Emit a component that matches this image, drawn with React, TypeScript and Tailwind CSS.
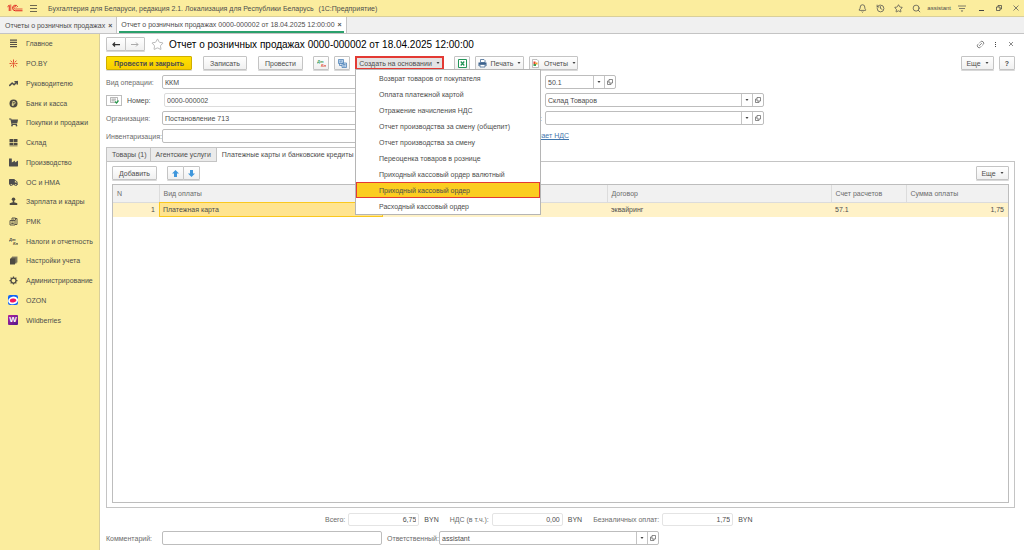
import type { ReactNode } from "react"
import { Bell, History, Link2, Search, Star, TrendingUp } from "lucide-react"
import { FaIndustry, FaShoppingCart, FaTruck } from "react-icons/fa"
import clsx from "clsx"

const iconBox = "size-[9px] shrink-0"

function Logo() {
  return (
    <svg viewBox="0 0 32 16" className="h-2 w-4" fill="none" stroke="#e0221c" strokeWidth="2">
      <path d="M1 5.5 4.5 2.500V14" />
      <path d="M7.500 1V14" strokeWidth="1.500" />
      <path d="M21.500 5.500A5.500 5.500 0 1 0 16.500 13.500H31" />
      <path d="M18.500 7A2.500 2.500 0 1 0 16.500 10H31" strokeWidth="1.500" />
    </svg>
  )
}

function ListIcon() {
  return (
    <svg viewBox="0 0 9 9" className={iconBox} fill="#555147">
      <path d="M1 .5h7v1.200H1zM1 2.700h7v1.200H1zM1 4.900h7v1.200H1zM1 7.100h7v1.200H1z" />
    </svg>
  )
}

function SparkIcon() {
  return (
    <svg viewBox="0 0 18 18" className={iconBox} fill="none" stroke="#e2502f" strokeWidth="2">
      <path d="M9 1v5M9 12v5M1 9h4M13 9h4M3 3.500l3.500 3M15 3.500l-3.500 3M3 14.500l3.500-3M15 14.500l-3.500-3" />
      <circle cx="9" cy="9" r="1.500" fill="#e2502f" />
    </svg>
  )
}

function CoinIcon() {
  return (
    <svg viewBox="0 0 18 18" className={iconBox}>
      <circle cx="9" cy="9" r="8" fill="#4d4a42" />
      <path d="M7.500 14V5H10a2.500 2.500 0 0 1 0 5H5.500M5.500 12H10" fill="none" stroke="#fbed9e" strokeWidth="1.500" />
    </svg>
  )
}

function StoreIcon() {
  return (
    <svg viewBox="0 0 18 18" className={iconBox} fill="#4d4a42">
      <path d="M1 2h7.500v6H1zM9.500 2H17v6H9.500zM1 9.500h7.500V14H1zM9.500 9.500H17V14H9.500zM1 15h16v1.500H1z" />
    </svg>
  )
}

function PersonIcon() {
  return (
    <svg viewBox="0 0 18 18" className={iconBox} fill="#4d4a42">
      <circle cx="9" cy="4.500" r="3.500" />
      <path d="M7.500 7h3v3.500l6 2V16h-15v-3.500l6-2z" />
    </svg>
  )
}

function RegisterIcon() {
  return (
    <svg viewBox="0 0 18 18" className={iconBox} fill="none" stroke="#4d4a42" strokeWidth="1.800">
      <path d="M2 7h10v9H2zM12 15h4V3h-3M6 7V2h7v5" />
      <path d="M4.500 10h5M4.500 13h5M8.500 4.500h2" />
    </svg>
  )
}

function LedgerIcon({ dt = "#4d4a42", kt = "#4d4a42" }) {
  return (
    <svg
      viewBox="0 0 18 18"
      className={iconBox}
      fontFamily="Liberation Sans, sans-serif"
      fontSize="8"
      fontWeight="700"
      fontStyle="italic"
    >
      <text x="0" y="8" fill={dt}>Дт</text>
      <text x="8" y="16" fill={kt}>Кт</text>
    </svg>
  )
}

function BooksIcon() {
  return (
    <svg viewBox="0 0 18 18" className={iconBox}>
      <path d="M6 1h11v12H6z" fill="#8a8468" />
      <path d="M4 3h11v12H4z" fill="#6b6754" />
      <path d="M2 5h10v12H2z" fill="#4d4a42" />
    </svg>
  )
}

function GearIcon() {
  return (
    <svg viewBox="0 0 18 18" className={iconBox} fill="none" stroke="#4d4a42">
      <circle cx="9" cy="9" r="5" strokeWidth="2.500" />
      <path
        d="M9 1v3M9 14v3M1 9h3M14 9h3M3.300 3.300l2 2M12.700 12.700l2 2M3.300 14.700l2-2M12.700 5.300l2-2"
        strokeWidth="2.500"
      />
    </svg>
  )
}

function OzonIcon() {
  return (
    <svg viewBox="0 0 20 20" className="size-[10px] shrink-0">
      <rect width="20" height="20" rx="4" fill="#1264f5" />
      <ellipse cx="10" cy="11" rx="10" ry="7.500" fill="#fff" transform="rotate(-15 10 10)" />
      <ellipse cx="10" cy="11" rx="6.500" ry="4" fill="#f3145f" transform="rotate(-8 10 10)" />
    </svg>
  )
}

function WildberriesIcon() {
  return (
    <span className="flex size-[10px] shrink-0 items-center justify-center rounded-[1px] bg-linear-to-br from-[#b01a9c] to-[#52168d] text-[8px] leading-none font-bold text-white">
      W
    </span>
  )
}

const sections: { label: string; icon: ReactNode }[] = [
  { label: "Главное", icon: <ListIcon /> },
  { label: "PO.BY", icon: <SparkIcon /> },
  { label: "Руководителю", icon: <TrendingUp className={iconBox} strokeWidth={4} /> },
  { label: "Банк и касса", icon: <CoinIcon /> },
  { label: "Покупки и продажи", icon: <FaShoppingCart className={iconBox} /> },
  { label: "Склад", icon: <StoreIcon /> },
  { label: "Производство", icon: <FaIndustry className={iconBox} /> },
  { label: "ОС и НМА", icon: <FaTruck className={iconBox} /> },
  { label: "Зарплата и кадры", icon: <PersonIcon /> },
  { label: "РМК", icon: <RegisterIcon /> },
  { label: "Налоги и отчетность", icon: <LedgerIcon /> },
  { label: "Настройки учета", icon: <BooksIcon /> },
  { label: "Администрирование", icon: <GearIcon /> },
  { label: "OZON", icon: <OzonIcon /> },
  { label: "Wildberries", icon: <WildberriesIcon /> },
]

const basedOnItems = [
  "Возврат товаров от покупателя",
  "Оплата платежной картой",
  "Отражение начисления НДС",
  "Отчет производства за смену (общепит)",
  "Отчет производства за смену",
  "Переоценка товаров в рознице",
  "Приходный кассовый ордер валютный",
  "Приходный кассовый ордер",
  "Расходный кассовый ордер",
]

function Caret() {
  return (
    <svg viewBox="0 0 6 4" className="h-[2px] w-[4px] shrink-0" fill="#444">
      <path d="M0 0h6L3 4z" />
    </svg>
  )
}

function Button({ className, children, label }: { className?: string; children: ReactNode; label?: string }) {
  return (
    <button
      type="button"
      aria-label={label}
      className={clsx(
        "flex h-[14px] shrink-0 items-center justify-center gap-1 rounded-[1px] border border-[#c4c4c4] bg-linear-to-b from-white to-[#f0f0f0] whitespace-nowrap shadow-[0_1px_0_#d8d8d8]",
        className,
      )}
    >
      {children}
    </button>
  )
}

function OpenIcon() {
  return (
    <svg viewBox="0 0 12 12" className="size-[6px]" fill="none" stroke="#666" strokeWidth="1.500">
      <path d="M4 1h7v7H4z" />
      <path d="M4 4H1v7h7V8" />
    </svg>
  )
}

function Combo({ id, value, className }: { id: string; value: string; className?: string }) {
  return (
    <div className={clsx("flex h-[14px] rounded-[2px] border border-[#bdbdbd] bg-white", className)}>
      <input id={id} defaultValue={value} className="w-0 min-w-0 flex-1 px-[2px] outline-none" />
      <button type="button" aria-label="Выбрать" className="flex w-[11px] items-center justify-center border-l border-[#c4c4c4]">
        <Caret />
      </button>
      <button type="button" aria-label="Открыть" className="flex w-[11px] items-center justify-center border-l border-[#c4c4c4]">
        <OpenIcon />
      </button>
    </div>
  )
}

function Field({ id, value, className }: { id: string; value: string; className?: string }) {
  return (
    <input
      id={id}
      defaultValue={value}
      className={clsx("h-[14px] min-w-0 rounded-[2px] border bg-white px-[2px] outline-none", className)}
    />
  )
}

function Total({ id, label, value }: { id: string; label: string; value: string }) {
  return (
    <div className="flex items-center">
      <label htmlFor={id} className="mr-[3px] text-[#6b6b6b]">{label}</label>
      <input
        id={id}
        readOnly
        defaultValue={value}
        className="h-[13px] w-[71px] rounded-[2px] border border-[#e4e4e4] px-[2px] text-right outline-none"
      />
      <span className="ml-[5px]">BYN</span>
    </div>
  )
}

function TopBar() {
  return (
    <header className="flex h-[17px] shrink-0 items-center border-b border-[#d9cf9a] bg-[#fbed9e] pl-[7px]">
      <Logo />
      <button type="button" aria-label="Меню" className="ml-[7px] flex w-[7px] flex-col gap-[2px]">
        <span className="h-px bg-[#6d6850]" />
        <span className="h-px bg-[#6d6850]" />
        <span className="h-px bg-[#6d6850]" />
      </button>
      <p className="ml-[11px] flex flex-1 gap-[5px] whitespace-nowrap">
        <span>Бухгалтерия для Беларуси, редакция 2.1. Локализация для Республики Беларусь</span>
        <span>(1С:Предприятие)</span>
      </p>
      <div className="flex items-center gap-[9px]">
        <button type="button" aria-label="Уведомления"><Bell className="size-[9px]" /></button>
        <button type="button" aria-label="История"><History className="size-[9px]" /></button>
        <button type="button" aria-label="Избранное"><Star className="size-[9px]" /></button>
        <button type="button" aria-label="Поиск"><Search className="size-[9px]" /></button>
      </div>
      <span className="ml-[6px] text-[6px]">assistant</span>
      <button type="button" aria-label="Настройки" className="ml-[7px]">
        <svg viewBox="0 0 16 14" className="h-[7px] w-[8px]" fill="none" stroke="#555" strokeWidth="1.500">
          <path d="M0 2h16M2 7h12" />
          <path d="M5.500 11h5L8 14z" fill="#555" stroke="none" />
        </svg>
      </button>
      <div className="ml-[6px] flex items-center">
        <button type="button" aria-label="Свернуть" className="flex h-4 w-[18px] items-center justify-center pt-1">
          <span className="h-px w-[5px] bg-[#444]" />
        </button>
        <button type="button" aria-label="Развернуть" className="flex h-4 w-[18px] items-center justify-center">
          <svg viewBox="0 0 12 12" className="size-[6px]" fill="none" stroke="#444" strokeWidth="1.500">
            <path d="M1 4h7v7H1zM4 4V1h7v7H8" />
          </svg>
        </button>
        <button type="button" aria-label="Закрыть" className="flex h-4 w-4 items-center justify-center">
          <svg viewBox="0 0 12 12" className="size-[6px]" stroke="#555" strokeWidth="1.500">
            <path d="M1 1l10 10M11 1L1 11" />
          </svg>
        </button>
      </div>
    </header>
  )
}

function WindowTabs() {
  return (
    <div className="flex h-[17px] shrink-0 border-b border-[#c4c4c4] bg-[#f0f0f0]">
      <div className="flex items-center gap-[3px] border-r border-[#c4c4c4] pr-[4px] pl-[5px]">
        <a href="#reports" className="whitespace-nowrap">Отчеты о розничных продажах</a>
        <button type="button" aria-label="Закрыть вкладку" className="font-bold">×</button>
      </div>
      <div className="flex border-r border-[#c4c4c4] bg-white px-[2px]">
        <div className="flex items-center gap-[3px] border-b-2 border-[#2ba06c] px-[2px]">
          <a href="#report" className="whitespace-nowrap">Отчет о розничных продажах 0000-000002 от 18.04.2025 12:00:00</a>
          <button type="button" aria-label="Закрыть вкладку" className="font-bold">×</button>
        </div>
      </div>
    </div>
  )
}

function Sidebar() {
  return (
    <nav className="w-[100px] shrink-0 border-r border-[#d9cf9a] bg-[#fbed9e]">
      <ul className="flex h-[296px] flex-col">
        {sections.map((s) => (
          <li key={s.label} className="flex flex-1 items-center">
            <a href="#section" className="flex items-center whitespace-nowrap">
              <span className="flex w-[26px] justify-center">{s.icon}</span>
              {s.label}
            </a>
          </li>
        ))}
      </ul>
    </nav>
  )
}

function BasedOnMenu() {
  return (
    <div className="relative ml-[5px]">
      <button
        type="button"
        aria-expanded
        className="flex h-[14px] w-[89px] items-center justify-center gap-1 border-2 border-[#e33a34] bg-[#e4e4e4] whitespace-nowrap"
      >
        Создать на основании
        <Caret />
      </button>
      <ul className="absolute top-full left-0 z-10 -mt-px w-[186px] border border-[#b5b5b5] bg-white">
        {basedOnItems.map((item) => (
          <li key={item}>
            <button
              type="button"
              className={clsx(
                "flex h-4 w-full items-center pl-[23px] text-left",
                item === "Приходный кассовый ордер" && "bg-[#fbcd20] outline outline-offset-[-1px] outline-[#e33a34]",
              )}
            >
              {item}
            </button>
          </li>
        ))}
      </ul>
    </div>
  )
}

function TitleRow() {
  return (
    <div className="flex h-[14px] items-center">
      <Button label="Назад" className="w-5">
        <svg viewBox="0 0 16 10" className="h-[5px] w-[8px]" fill="none" stroke="#333" strokeWidth="2.500">
          <path d="M16 5H2M6 1 2 5l4 4" />
        </svg>
      </Button>
      <Button label="Вперед" className="-ml-px w-5">
        <svg viewBox="0 0 16 10" className="h-[5px] w-[8px]" fill="none" stroke="#aaa" strokeWidth="2">
          <path d="M0 5h14M10 1l4 4-4 4" />
        </svg>
      </Button>
      <button type="button" aria-label="В избранное" className="ml-[6px]">
        <Star className="size-[13px] text-[#aaa]" strokeWidth={1.5} />
      </button>
      <h1 className="ml-[5px] flex-1 text-[10px] whitespace-nowrap text-black">
        Отчет о розничных продажах 0000-000002 от 18.04.2025 12:00:00
      </h1>
      <div className="flex items-center gap-[10px] pr-[2px] text-[#666]">
        <button type="button" aria-label="Ссылка"><Link2 className="size-[9px] -rotate-45" /></button>
        <button type="button" aria-label="Еще" className="mr-[3px] flex flex-col gap-px">
          <span className="size-px bg-[#444]" />
          <span className="size-px bg-[#444]" />
          <span className="size-px bg-[#444]" />
        </button>
        <button type="button" aria-label="Закрыть">
          <svg viewBox="0 0 8 8" className="size-[4px]" stroke="#666" strokeWidth="1.500">
            <path d="M0 0l8 8M8 0L0 8" />
          </svg>
        </button>
      </div>
    </div>
  )
}

function Toolbar() {
  return (
    <div className="mt-[5px] flex items-center">
      <button
        type="button"
        className="h-[14px] w-[86px] rounded-[1px] border border-[#cfae00] bg-linear-to-b from-[#ffe100] to-[#f7cd00] font-bold whitespace-nowrap shadow-[0_1px_0_#d8d8d8]"
      >
        Провести и закрыть
      </button>
      <Button className="ml-[11px] w-[44px]">Записать</Button>
      <Button className="ml-[11px] w-[45px]">Провести</Button>
      <Button label="Проводки" className="ml-[10px] w-4"><LedgerIcon dt="#3b9c5b" kt="#dd4a3a" /></Button>
      <Button label="Структура подчиненности" className="ml-[5px] w-4">
        <svg viewBox="0 0 18 18" className={iconBox} fill="#cfe1f3" stroke="#4a7fb5" strokeWidth="1.500">
          <path d="M1 1h10v8H1zM8 8h9v9H8zM3 4h6M3 6h4M10 11h5M10 14h5M3 9v4h5" />
        </svg>
      </Button>
      <BasedOnMenu />
      <Button label="Excel" className="ml-[10px] w-4">
        <svg viewBox="0 0 18 18" className={iconBox} fill="#fff" stroke="#24955a" strokeWidth="2">
          <path d="M1 1h16v16H1z" />
          <path d="M5.500 5l7 8M12.500 5l-7 8" strokeWidth="2.500" />
        </svg>
      </Button>
      <Button className="ml-[5px] w-[49px]">
        <svg viewBox="0 0 18 18" className={iconBox} fill="#3a608c">
          <path d="M5 1h7l2 2v4H5z" fill="#fff" stroke="#3a608c" strokeWidth="1.500" />
          <path d="M1 7h16v7h-2v-3H3v3H1z" />
          <path d="M4 11h10v5H4z" fill="#fff" stroke="#3a608c" strokeWidth="1.500" />
        </svg>
        Печать
        <Caret />
      </Button>
      <Button className="ml-[5px] w-[49px]">
        <svg viewBox="0 0 18 18" className={iconBox}>
          <path d="M3 1h9l3 3v13H3z" fill="#fff" stroke="#999" strokeWidth="1.200" />
          <path d="M5 5h4v5H5z" fill="#e8452e" />
          <path d="M9 7h4v4H9z" fill="#f0a020" />
          <path d="M5 10h5v4H5z" fill="#3e9b4f" />
        </svg>
        Отчеты
        <Caret />
      </Button>
      <div className="ml-auto flex gap-[5px]">
        <Button className="w-[33px]">Еще<Caret /></Button>
        <Button label="Справка" className="w-4 font-bold">?</Button>
      </div>
    </div>
  )
}

function Details() {
  return (
    <div className="mt-[5px] flex gap-[40px]">
      <div className="flex w-[334px] flex-col gap-[4px]">
        <div className="flex items-center">
          <label htmlFor="operation" className="w-[56px] text-[#6b6b6b]">Вид операции:</label>
          <Field id="operation" value="ККМ" className="flex-1 border-[#bdbdbd]" />
        </div>
        <div className="flex items-center">
          <button type="button" aria-label="Проведен" className="flex h-[11px] w-4 items-center justify-center border border-[#bdbdbd]">
            <svg viewBox="0 0 18 14" className="h-[7px] w-[9px]" fill="none" stroke="#888" strokeWidth="1.200">
              <path d="M1 1h14v10H1zM3 4h9M3 6h9M3 8h6" />
              <path d="M10 9l3 3 4-5" stroke="#2c9a50" strokeWidth="2.500" />
            </svg>
          </button>
          <label htmlFor="number" className="ml-[5px] w-[37px]">Номер:</label>
          <Field id="number" value="0000-000002" className="flex-1 border-[#dcdcdc]" />
        </div>
        <div className="flex items-center">
          <label htmlFor="organization" className="w-[56px] text-[#6b6b6b]">Организация:</label>
          <Field id="organization" value="Постановление 713" className="flex-1 border-[#bdbdbd]" />
        </div>
        <div className="flex items-center">
          <label htmlFor="inventory" className="w-[56px] whitespace-nowrap text-[#6b6b6b]">Инвентаризация:</label>
          <Field id="inventory" value="" className="flex-1 border-[#bdbdbd]" />
        </div>
      </div>
      <div className="flex flex-col gap-[4px]">
        <div className="flex items-center">
          <label htmlFor="account" className="w-[65px] text-[#6b6b6b]">Счет кассы:</label>
          <Combo id="account" value="50.1" className="w-[71px]" />
        </div>
        <div className="flex items-center">
          <label htmlFor="warehouse" className="w-[65px] text-[#6b6b6b]">Склад:</label>
          <Combo id="warehouse" value="Склад Товаров" className="w-[219px]" />
        </div>
        <div className="flex items-center">
          <label htmlFor="department" className="w-[65px] pr-[3px] text-right text-[#6b6b6b]">Подразделение:</label>
          <Combo id="department" value="" className="w-[219px]" />
        </div>
        <a href="#prices" className="w-[89px] pt-[2px] text-right whitespace-nowrap text-[#3f76ad] underline">
          Цена включает НДС
        </a>
      </div>
    </div>
  )
}

function PaymentsTable() {
  return (
    <div className="mt-[4px] flex-1 border border-[#bdbdbd]">
      <table className="w-full table-fixed border-collapse text-left">
        <colgroup>
          <col className="w-[46px]" />
          <col />
          <col />
          <col />
          <col className="w-[75px]" />
          <col className="w-[102px]" />
        </colgroup>
        <thead>
          <tr className="h-[17px] border-b border-[#dcdcdc] bg-[#f1f1f1] text-[#6b6b6b] *:border-r *:border-[#dcdcdc] *:px-1 *:font-normal *:last:border-r-0">
            <th>N</th>
            <th>Вид оплаты</th>
            <th />
            <th>Договор</th>
            <th>Счет расчетов</th>
            <th>Сумма оплаты</th>
          </tr>
        </thead>
        <tbody>
          <tr className="h-[15px] bg-[#fff2c8] *:px-1">
            <td className="text-right">1</td>
            <td className="bg-[#ffe48f] outline outline-offset-[-1px] outline-[#fac81e]">Платежная карта</td>
            <td />
            <td>эквайринг</td>
            <td>57.1</td>
            <td className="text-right">1,75</td>
          </tr>
        </tbody>
      </table>
    </div>
  )
}

function Payments() {
  return (
    <section className="mt-[4px] flex flex-1 flex-col">
      <div role="tablist" className="flex h-[15px]">
        <button type="button" role="tab" className="border border-r-0 border-[#c4c4c4] bg-[#ebebeb] pr-[3px] pl-[5px]">
          Товары (1)
        </button>
        <button type="button" role="tab" className="border border-[#c4c4c4] bg-[#ebebeb] px-[5px]">Агентские услуги</button>
        <button
          type="button"
          role="tab"
          aria-selected
          className="border-y border-r border-[#c4c4c4] border-b-transparent px-[5px]"
        >
          Платежные карты и банковские кредиты (1)
        </button>
        <div className="flex-1 border-b border-[#c4c4c4]" />
      </div>
      <div className="flex flex-1 flex-col border border-t-0 border-[#c4c4c4] px-[5px] pt-[4px] pb-[4px]">
        <div className="flex">
          <Button className="w-[45px]">Добавить</Button>
          <Button label="Вверх" className="ml-[10px] w-[17px]">
            <svg viewBox="0 0 14 14" className="size-[7px]" fill="#3f97dc"><path d="M7 0l7 7h-4v7H4V7H0z" /></svg>
          </Button>
          <Button label="Вниз" className="-ml-px w-[17px]">
            <svg viewBox="0 0 14 14" className="size-[7px]" fill="#3f97dc"><path d="M7 14l7-7h-4V0H4v7H0z" /></svg>
          </Button>
          <Button className="ml-auto w-[33px]">Еще<Caret /></Button>
        </div>
        <PaymentsTable />
      </div>
    </section>
  )
}

function Footer() {
  return (
    <footer className="pt-[5px] pb-[5px]">
      <div className="flex gap-[11px] pl-[219px]">
        <Total id="total" label="Всего:" value="6,75" />
        <Total id="vat" label="НДС (в т.ч.):" value="0,00" />
        <Total id="cashless" label="Безналичных оплат:" value="1,75" />
      </div>
      <div className="mt-[5px] flex items-center">
        <label htmlFor="comment" className="w-[56px] text-[#6b6b6b]">Комментарий:</label>
        <Field id="comment" value="" className="w-[220px] border-[#bdbdbd]" />
        <label htmlFor="responsible" className="ml-[5px] w-[52px] whitespace-nowrap text-[#6b6b6b]">Ответственный:</label>
        <Combo id="responsible" value="assistant" className="w-[220px]" />
      </div>
    </footer>
  )
}

export default function App() {
  return (
    <div className="flex min-h-screen flex-col bg-white font-['Liberation_Sans',Arial,sans-serif] text-[7px] leading-[9px] text-[#4d4d4d]">
      <TopBar />
      <WindowTabs />
      <div className="flex flex-1">
        <Sidebar />
        <main className="flex min-w-0 flex-1 flex-col pt-[3px] pr-[9px] pl-[6px]">
          <TitleRow />
          <Toolbar />
          <Details />
          <Payments />
          <Footer />
        </main>
      </div>
    </div>
  )
}
